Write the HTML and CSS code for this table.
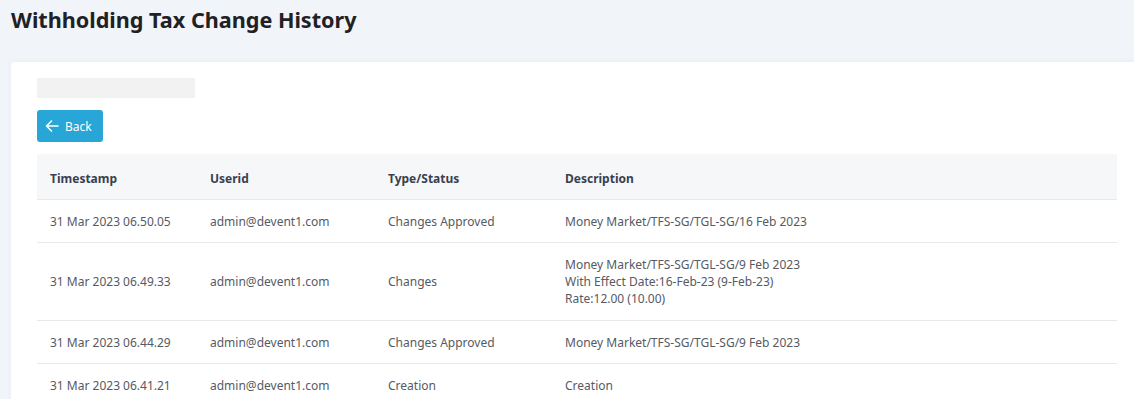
FILE: index.html
```html
<!DOCTYPE html>
<html lang="en">
<head>
    <meta charset="UTF-8" />
    <meta name="viewport" content="width=device-width, initial-scale=1.0"/>
    <title>Withholding Tax Change History</title>
    <link rel="stylesheet" href="styles.css">
</head>
<body>
    <h1 class="page-title">Withholding Tax Change History</h1>

    <div class="card">
        <div class="placeholder"></div>

        <button class="back-btn" type="button">
            <svg width="14" height="14" viewBox="0 0 14 14" fill="none" stroke="#fff" stroke-width="1.6" stroke-linecap="round" stroke-linejoin="round">
                <path d="M13 7H1.5M6.5 2L1.5 7l5 5"/>
            </svg>
            <span>Back</span>
        </button>

        <!-- History table -->
        <table class="history">
            <thead>
                <tr>
                    <th class="col-time">Timestamp</th>
                    <th class="col-user">Userid</th>
                    <th class="col-type">Type/Status</th>
                    <th>Description</th>
                </tr>
            </thead>
            <tbody>
                <tr>
                    <td>31 Mar 2023 06.50.05</td>
                    <td>admin@devent1.com</td>
                    <td>Changes Approved</td>
                    <td>Money Market/TFS-SG/TGL-SG/16 Feb 2023</td>
                </tr>
                <tr>
                    <td>31 Mar 2023 06.49.33</td>
                    <td>admin@devent1.com</td>
                    <td>Changes</td>
                    <td>Money Market/TFS-SG/TGL-SG/9 Feb 2023<br>With Effect Date:16-Feb-23 (9-Feb-23)<br>Rate:12.00 (10.00)</td>
                </tr>
                <tr>
                    <td>31 Mar 2023 06.44.29</td>
                    <td>admin@devent1.com</td>
                    <td>Changes Approved</td>
                    <td>Money Market/TFS-SG/TGL-SG/9 Feb 2023</td>
                </tr>
                <tr>
                    <td>31 Mar 2023 06.41.21</td>
                    <td>admin@devent1.com</td>
                    <td>Creation</td>
                    <td>Creation</td>
                </tr>
            </tbody>
        </table>
    </div>
</body>
</html>
```

FILE: styles.css
```css
html, body {
    overflow: hidden;
}

body {
    margin: 0;
    padding: 0 0 0 11px;
    font-family: 'Noto Sans', 'Open Sans', sans-serif;
    background-color: #f1f4f8;
    color: #555a64;
}

.page-title {
    margin: 0;
    padding: 5px 0 0 0;
    height: 62px;
    box-sizing: border-box;
    font-size: 21.6px;
    font-weight: 700;
    color: #1f2125;
    line-height: 30px;
}

.card {
    width: 1132px;
    box-sizing: border-box;
    background-color: #fff;
    border-radius: 4px 0 0 0;
    padding: 16px 26px 20px 26px;
    box-shadow: 0 0 6px rgba(30, 40, 60, 0.04);
}

.placeholder {
    width: 158px;
    height: 20px;
    background-color: #f2f2f2;
    margin-bottom: 12px;
}

.back-btn {
    display: flex;
    align-items: center;
    gap: 6px;
    height: 32px;
    width: 66px;
    padding: 0 0 0 8px;
    border: none;
    border-radius: 3px;
    background-color: #27a6d7;
    color: #fff;
    font-family: inherit;
    font-size: 12px;
    cursor: pointer;
    margin-bottom: 12px;
}

.history {
    width: 100%;
    border-collapse: collapse;
    font-size: 12px;
    line-height: 17px;
}

.history th {
    text-align: left;
    font-weight: 700;
    color: #3a3f4f;
    background-color: #f6f7f9;
    padding: 16px 13px 12px 13px;
    border-bottom: 1px solid #e8e9eb;
}

.history td {
    padding: 13px 13px 12px 13px;
    border-bottom: 1px solid #e8e9eb;
    vertical-align: middle;
}

.history tbody tr:nth-child(2) td {
    padding: 13px 13px 13px 13px;
}

.col-time { width: 134px; }
.col-user { width: 152px; }
.col-type { width: 151px; }
```
